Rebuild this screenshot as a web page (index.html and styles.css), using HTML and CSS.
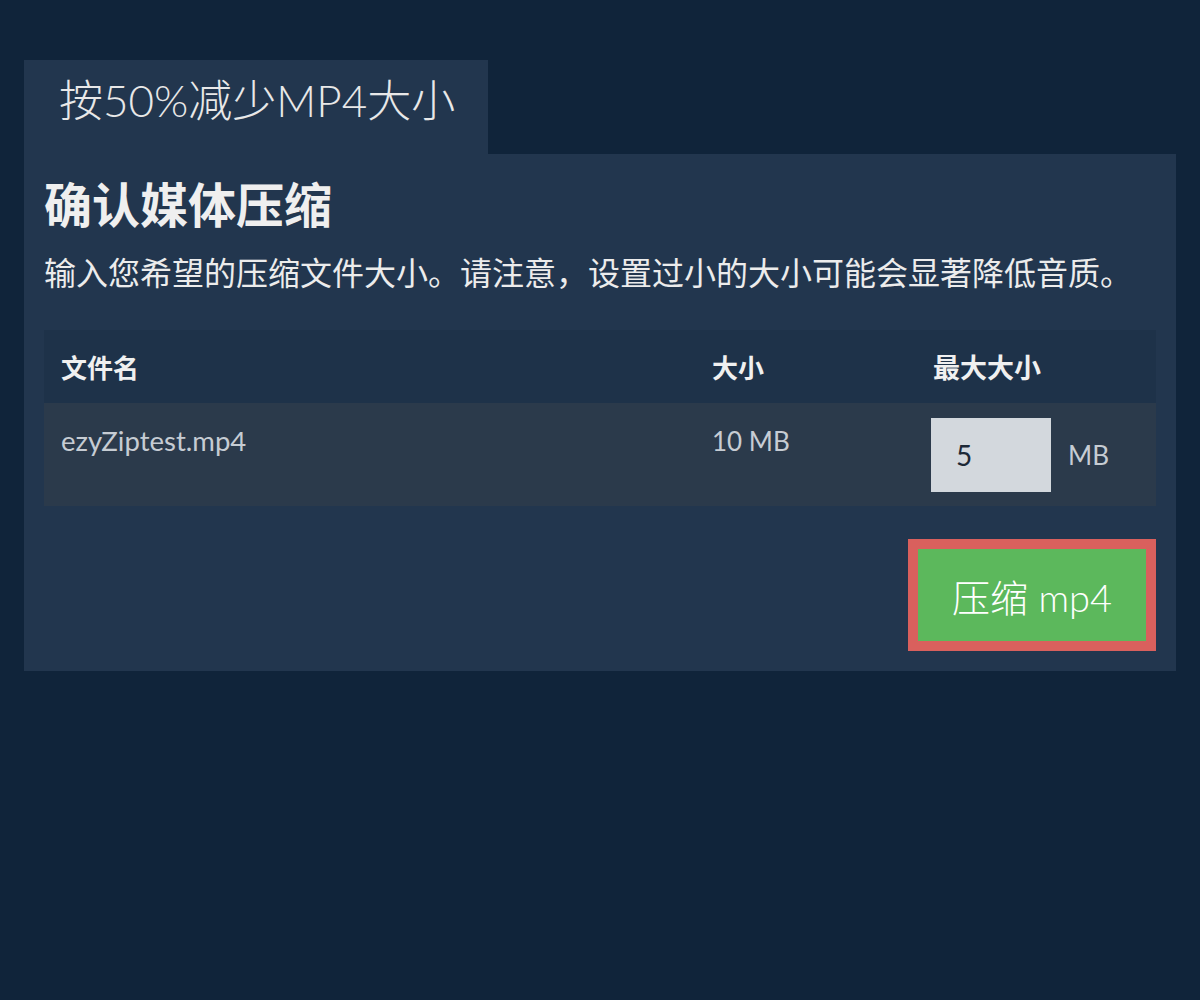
FILE: index.html
```html
<!DOCTYPE html>
<html lang="zh">
<head>
<meta charset="utf-8">
<title>按50%减少MP4大小</title>
<link rel="stylesheet" href="styles.css">
</head>
<body>
<div class="page">
  <div class="tab">按50%减少MP4大小</div>
  <div class="panel">
    <h2 class="title">确认媒体压缩</h2>
    <p class="desc">输入您希望的压缩文件大小。请注意，设置过小的大小可能会显著降低音质。</p>
    <table class="files">
      <thead>
        <tr>
          <th class="c-name">文件名</th>
          <th class="c-size">大小</th>
          <th class="c-max">最大大小</th>
        </tr>
      </thead>
      <tbody>
        <tr>
          <td class="c-name">ezyZiptest.mp4</td>
          <td class="c-size">10 MB</td>
          <td class="c-max">
            <div class="max-wrap">
              <input class="max-input" type="text" value="5">
              <span class="unit">MB</span>
            </div>
          </td>
        </tr>
      </tbody>
    </table>
    <div class="actions">
      <button class="compress-btn" type="button">压缩 mp4</button>
    </div>
  </div>
</div>
</body>
</html>
```

FILE: styles.css
```css
html, body {
  margin: 0;
  padding: 0;
  background: #10243a;
}
body {
  font-family: Lato, "Noto Sans CJK SC", sans-serif;
  color: #ececec;
}
.page {
  padding: 60px 24px;
  display: flex;
  flex-direction: column;
  align-items: flex-start;
}
.tab {
  background: #22364e;
  font-size: 44px;
  font-weight: 300;
  line-height: 50px;
  padding: 15px 33px 29px 35px;
  color: #e8e8e8;
}
.panel {
  align-self: stretch;
  background: #22364e;
  padding: 23px 20px 20px 20px;
}
.title {
  margin: 0;
  font-size: 48px;
  font-weight: 700;
  line-height: 56px;
  color: #efefef;
}
.desc {
  margin: 17px 0 0 0;
  font-size: 32px;
  line-height: 45px;
  color: #ececec;
}
.files {
  margin-top: 35px;
  width: 100%;
  border-collapse: collapse;
  font-size: 26px;
}
.files thead tr {
  background: #1e3249;
}
.files th {
  text-align: left;
  font-weight: 700;
  height: 73px;
  padding: 0 17px;
  box-sizing: border-box;
  vertical-align: middle;
  color: #f0f0f0;
}
.files th.c-max {
  font-size: 27px;
}
.files tbody tr {
  background: #2b3a4b;
}
.files td {
  vertical-align: top;
  height: 103px;
  padding: 22px 17px 0 17px;
  box-sizing: border-box;
  color: #c6ccd3;
  line-height: 32px;
}
.files td.c-name {
  font-size: 27.5px;
}
.files .c-name { width: 651px; }
.files .c-size { width: 221px; }
.files td.c-max {
  padding: 15px 15px 0 15px;
}
.max-wrap {
  display: flex;
  align-items: center;
  gap: 17px;
}
.max-input {
  width: 120px;
  height: 74px;
  box-sizing: border-box;
  border: none;
  background: #d3d8dd;
  color: #1d2937;
  font-family: Lato, sans-serif;
  font-size: 28px;
  padding: 0 0 0 25px;
  outline: none;
}
.unit {
  font-size: 26px;
  color: #c6ccd3;
}
.actions {
  margin-top: 33px;
  display: flex;
  justify-content: flex-end;
}
.compress-btn {
  display: block;
  height: 112px;
  box-sizing: border-box;
  border: 10px solid #d9605d;
  background: #5cb85c;
  color: #ffffff;
  font-family: Lato, "Noto Sans CJK SC", sans-serif;
  font-weight: 300;
  font-size: 38px;
  padding: 0 34px;
  cursor: pointer;
}
```
